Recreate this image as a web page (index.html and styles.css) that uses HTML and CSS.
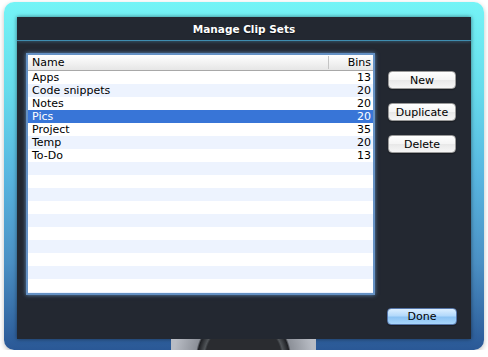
FILE: index.html
```html
<!DOCTYPE html>
<html lang="en">
<head>
    <meta charset="UTF-8">
    <title>Manage Clip Sets</title>
    <link rel="stylesheet" href="styles.css">
</head>
<body>
    <div class="window">
        <div class="panel">
            <div class="title">Manage Clip Sets</div>
            <div class="content">
                <div class="table-box">
                    <div class="head">
                        <span class="col-name">Name</span>
                        <span class="col-bins">Bins</span>
                    </div>
                    <div class="rows">
                        <div class="row"><span>Apps</span><span>13</span></div>
                        <div class="row"><span>Code snippets</span><span>20</span></div>
                        <div class="row"><span>Notes</span><span>20</span></div>
                        <div class="row selected"><span>Pics</span><span>20</span></div>
                        <div class="row"><span>Project</span><span>35</span></div>
                        <div class="row"><span>Temp</span><span>20</span></div>
                        <div class="row"><span>To-Do</span><span>13</span></div>
                        <div class="row"></div>
                        <div class="row"></div>
                        <div class="row"></div>
                        <div class="row"></div>
                        <div class="row"></div>
                        <div class="row"></div>
                        <div class="row"></div>
                        <div class="row"></div>
                        <div class="row"></div>
                        <div class="row"></div>
                        <div class="row"></div>
                    </div>
                </div>
                <div class="side">
                    <button class="btn">New</button>
                    <button class="btn">Duplicate</button>
                    <button class="btn">Delete</button>
                </div>
            </div>
            <div class="footer">
                <button class="btn done">Done</button>
            </div>
        </div>
        <div class="behind">
            <div class="photo"></div>
        </div>
    </div>
</body>
</html>
```

FILE: styles.css
```css
body {
    margin: 0;
    background: #ffffff;
    font-family: "DejaVu Sans", sans-serif;
    font-size: 11px;
}
.window {
    margin: 2px 0 0 4px;
    width: 480px;
    height: 348px;
    border-radius: 10px;
    background: linear-gradient(to bottom, #74f4f6 0%, #66dcec 25%, #58b6e0 50%, #4b90c4 75%, #2a5896 100%);
    box-shadow: 0 2px 5px rgba(0, 0, 0, 0.25);
    overflow: hidden;
    display: flex;
    flex-direction: column;
}
.panel {
    margin: 15px 13px 0 13px;
    height: 322px;
    background: #232831;
    box-shadow: 0 0 4px rgba(0, 0, 0, 0.5);
    display: flex;
    flex-direction: column;
}
.title {
    height: 23px;
    line-height: 24px;
    text-align: center;
    color: #ffffff;
    font-weight: bold;
    font-size: 10.5px;
    text-shadow: 0 1px 1px rgba(0, 0, 0, 0.6);
    border-bottom: 1px solid #3f8db0;
    box-shadow: 0 1px 3px rgba(90, 180, 220, 0.3);
}
.content {
    display: flex;
    padding: 12px 0 0 9px;
}
.table-box {
    width: 345px;
    height: 238px;
    background: #ffffff;
    border: 2px solid #6591c4;
    box-shadow: 0 0 4px rgba(120, 180, 240, 0.7);
    overflow: hidden;
    color: #000000;
}
.head {
    height: 15px;
    display: flex;
    background: linear-gradient(to bottom, #ffffff, #e6e6e6);
    border-bottom: 1px solid #a8a8a8;
    line-height: 15px;
}
.col-name {
    flex: 1;
    padding-left: 4px;
    border-right: 1px solid #c4c4c4;
    margin: 1px 0;
    line-height: 13px;
}
.col-bins {
    width: 42px;
    text-align: right;
    padding-right: 2px;
}
.row {
    height: 13px;
    line-height: 13px;
    display: flex;
    justify-content: space-between;
    padding: 0 2px 0 4px;
}
.row:nth-child(even) {
    background: #edf3fe;
}
.row.selected {
    background: #3875d7;
    color: #ffffff;
}
.side {
    display: flex;
    flex-direction: column;
    gap: 14px;
    margin: 18px 0 0 13px;
}
.btn {
    width: 68px;
    height: 18px;
    padding: 0;
    border: 1px solid #9a9a9a;
    border-radius: 4px;
    background: linear-gradient(to bottom, #ffffff 0%, #f4f4f4 50%, #e8e8e8 51%, #f6f6f6 100%);
    box-shadow: 0 1px 1px rgba(0, 0, 0, 0.3);
    font-family: "DejaVu Sans", sans-serif;
    font-size: 11px;
    color: #000000;
}
.footer {
    display: flex;
    justify-content: flex-end;
    padding: 13px 14px 0 0;
}
.btn.done {
    width: 70px;
    height: 17px;
    border-color: #5575a8;
    background: linear-gradient(to bottom, #dcefff 0%, #b3d9fb 45%, #8cc3f3 55%, #a8d6fb 100%);
}
.behind {
    height: 11px;
    display: flex;
    justify-content: center;
    padding-right: 2px;
}
.photo {
    width: 145px;
    background: radial-gradient(circle at 50% 180%, #2a2c30 0, #2a2c30 38px, #505458 40px, #1e2024 46px, #8c9098 48px, #b8bcc4 70px);
}
```
